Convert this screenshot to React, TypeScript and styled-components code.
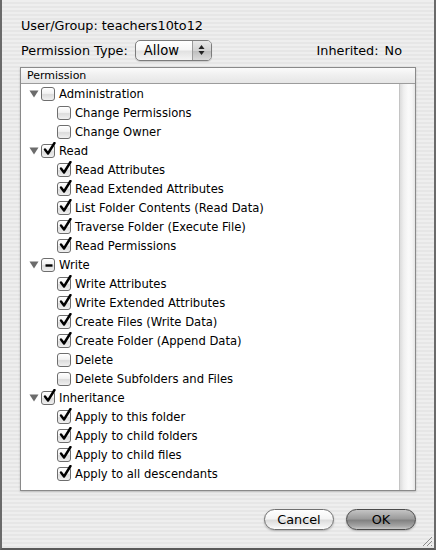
import React from "react";
import styled, { createGlobalStyle } from "styled-components";

const GlobalStyle = createGlobalStyle`
  html, body { margin: 0; padding: 0; background: #e9e9e9; }
  * { box-sizing: border-box; }
`;

const FONT = `"DejaVu Sans", "Liberation Sans", sans-serif`;

const Sheet = styled.div`
  position: relative;
  width: 436px;
  height: 550px;
  padding: 17px 18px 0 18px;
  font-family: ${FONT};
  font-size: 12.8px;
  color: #000;
  background: repeating-linear-gradient(to bottom, #eeeeee 0px, #eeeeee 2px, #e6e6e6 2px, #e6e6e6 4px);
  border-left: 2px solid #6a6a6a;
  border-right: 2px solid #6a6a6a;
  border-bottom: 2px solid #5a5a5a;
  display: flex;
  flex-direction: column;
`;

const InfoLine = styled.div`
  height: 18px;
  line-height: 18px;
  padding-left: 1px;
`;

const TypeRow = styled.div`
  margin-top: 4px;
  height: 22px;
  display: flex;
  align-items: center;
  padding-left: 1px;
`;

const Label = styled.span`
  margin-right: 7px;
`;

const Spacer = styled.div`
  flex: 1;
`;

const Inherited = styled.span`
  margin-right: 14px;
  word-spacing: 2px;
`;

const Popup = styled.div`
  width: 77px;
  height: 21px;
  border: 1px solid #7c7c7c;
  border-radius: 5px;
  display: flex;
  overflow: hidden;
  background: linear-gradient(to bottom, #ffffff 0%, #f6f6f6 45%, #e2e2e2 55%, #f4f4f4 100%);
  box-shadow: 0 1px 1px rgba(0, 0, 0, 0.15);
`;

const PopupText = styled.div`
  flex: 1;
  padding-left: 8px;
  line-height: 19px;
  font-size: 13.2px;
`;

const Stepper = styled.div`
  width: 19px;
  border-left: 1px solid #9a9a9a;
  background: linear-gradient(to bottom, #e8e8e8 0%, #d2d2d2 50%, #bdbdbd 52%, #dadada 100%);
  display: flex;
  align-items: center;
  justify-content: center;
`;

const ListBox = styled.div`
  margin-top: 6px;
  width: 396px;
  height: 424px;
  border: 1px solid #8a8a8a;
  background: #ffffff;
  box-shadow: 0 1px 2px rgba(0, 0, 0, 0.2);
  display: flex;
  flex-direction: column;
`;

const ListHeader = styled.div`
  height: 16px;
  line-height: 15px;
  font-size: 11px;
  padding-left: 6px;
  border-bottom: 1px solid #9c9c9c;
  background: linear-gradient(to bottom, #fbfbfb 0%, #efefef 50%, #e6e6e6 100%);
`;

const ListBody = styled.div`
  flex: 1;
  display: flex;
  min-height: 0;
`;

const Rows = styled.div`
  flex: 1;
`;

const Scroller = styled.div`
  width: 16px;
  border-left: 1px solid #c4c4c4;
  background: linear-gradient(to right, #dcdcdc 0%, #efefef 25%, #fafafa 55%, #f6f6f6 80%, #e6e6e6 100%);
`;

const Row = styled.div<{ $child?: boolean }>`
  height: 19px;
  display: flex;
  align-items: center;
  padding-left: ${(p) => (p.$child ? "36px" : "8px")};
  white-space: nowrap;
  font-size: 11.6px;
`;

const Disclosure = styled.span`
  width: 12px;
  display: flex;
  align-items: center;
  justify-content: flex-start;
`;

const Box = styled.span`
  width: 14px;
  height: 14px;
  border: 1px solid #6e6e6e;
  border-radius: 3px;
  margin-right: 4px;
  position: relative;
  background: linear-gradient(to bottom, #ffffff 0%, #f2f2f2 45%, #dcdcdc 55%, #f0f0f0 100%);
  box-shadow: inset 0 1px 1px rgba(255, 255, 255, 0.9);
  flex: none;
`;

const Mark = styled.svg`
  position: absolute;
  left: 1px;
  top: -3px;
`;

type State = "on" | "off" | "mixed";

const Checkbox = ({ state }: { state: State }) => (
  <Box>
    {state === "on" && (
      <Mark width="13" height="14" viewBox="0 0 13 14">
        <path d="M2 7.5 L5 11.5 L11.5 1" fill="none" stroke="#000" strokeWidth="2.4" strokeLinecap="round" strokeLinejoin="round" />
      </Mark>
    )}
    {state === "mixed" && (
      <Mark width="13" height="14" viewBox="0 0 13 14">
        <path d="M2.5 9.5 L9.5 9.5" stroke="#000" strokeWidth="2.4" />
      </Mark>
    )}
  </Box>
);

const Triangle = () => (
  <svg width="10" height="8" viewBox="0 0 10 8">
    <path d="M0.5 0.5 L9.5 0.5 L5 7.5 Z" fill="#6c6c6c" />
  </svg>
);

const ButtonRow = styled.div`
  margin-top: 18px;
  display: flex;
  justify-content: flex-end;
  gap: 12px;
  padding-right: 0px;
`;

const Button = styled.div<{ $default?: boolean }>`
  width: 70px;
  height: 21px;
  border-radius: 11px;
  border: 1px solid ${(p) => (p.$default ? "#4a4a4a" : "#707070")};
  font-size: 12.8px;
  line-height: 19px;
  text-align: center;
  background: ${(p) =>
    p.$default
      ? "linear-gradient(to bottom, #c4c4c4 0%, #9c9c9c 45%, #828282 55%, #a6a6a6 85%, #c8c8c8 100%)"
      : "linear-gradient(to bottom, #ffffff 0%, #f4f4f4 45%, #dcdcdc 55%, #f0f0f0 85%, #ffffff 100%)"};
  box-shadow: 0 1px 2px rgba(0, 0, 0, 0.25);
`;

const Grip = styled.svg`
  position: absolute;
  right: 1px;
  bottom: 1px;
`;

type Item = { label: string; state: State; children?: { label: string; state: State }[] };

const tree: Item[] = [
  {
    label: "Administration",
    state: "off",
    children: [
      { label: "Change Permissions", state: "off" },
      { label: "Change Owner", state: "off" },
    ],
  },
  {
    label: "Read",
    state: "on",
    children: [
      { label: "Read Attributes", state: "on" },
      { label: "Read Extended Attributes", state: "on" },
      { label: "List Folder Contents (Read Data)", state: "on" },
      { label: "Traverse Folder (Execute File)", state: "on" },
      { label: "Read Permissions", state: "on" },
    ],
  },
  {
    label: "Write",
    state: "mixed",
    children: [
      { label: "Write Attributes", state: "on" },
      { label: "Write Extended Attributes", state: "on" },
      { label: "Create Files (Write Data)", state: "on" },
      { label: "Create Folder (Append Data)", state: "on" },
      { label: "Delete", state: "off" },
      { label: "Delete Subfolders and Files", state: "off" },
    ],
  },
  {
    label: "Inheritance",
    state: "on",
    children: [
      { label: "Apply to this folder", state: "on" },
      { label: "Apply to child folders", state: "on" },
      { label: "Apply to child files", state: "on" },
      { label: "Apply to all descendants", state: "on" },
    ],
  },
];

export default function App() {
  return (
    <>
      <GlobalStyle />
      <Sheet>
        <InfoLine>User/Group: teachers10to12</InfoLine>
        <TypeRow>
          <Label>Permission Type:</Label>
          <Popup>
            <PopupText>Allow</PopupText>
            <Stepper>
              <svg width="7" height="12" viewBox="0 0 7 12">
                <path d="M0.5 5 L6.5 5 L3.5 1 Z" fill="#222" />
                <path d="M0.5 7 L6.5 7 L3.5 11 Z" fill="#222" />
              </svg>
            </Stepper>
          </Popup>
          <Spacer />
          <Inherited>Inherited: No</Inherited>
        </TypeRow>
        <ListBox>
          <ListHeader>Permission</ListHeader>
          <ListBody>
            <Rows>
              {tree.map((group) => (
                <React.Fragment key={group.label}>
                  <Row>
                    <Disclosure>
                      <Triangle />
                    </Disclosure>
                    <Checkbox state={group.state} />
                    {group.label}
                  </Row>
                  {group.children?.map((c) => (
                    <Row $child key={c.label}>
                      <Checkbox state={c.state} />
                      {c.label}
                    </Row>
                  ))}
                </React.Fragment>
              ))}
            </Rows>
            <Scroller />
          </ListBody>
        </ListBox>
        <ButtonRow>
          <Button>Cancel</Button>
          <Button $default>OK</Button>
        </ButtonRow>
        <Grip width="12" height="12" viewBox="0 0 12 12">
          <path d="M11 2 L2 11 M11 6 L6 11 M11 10 L10 11" stroke="#8a8a8a" strokeWidth="1" />
        </Grip>
      </Sheet>
    </>
  );
}
